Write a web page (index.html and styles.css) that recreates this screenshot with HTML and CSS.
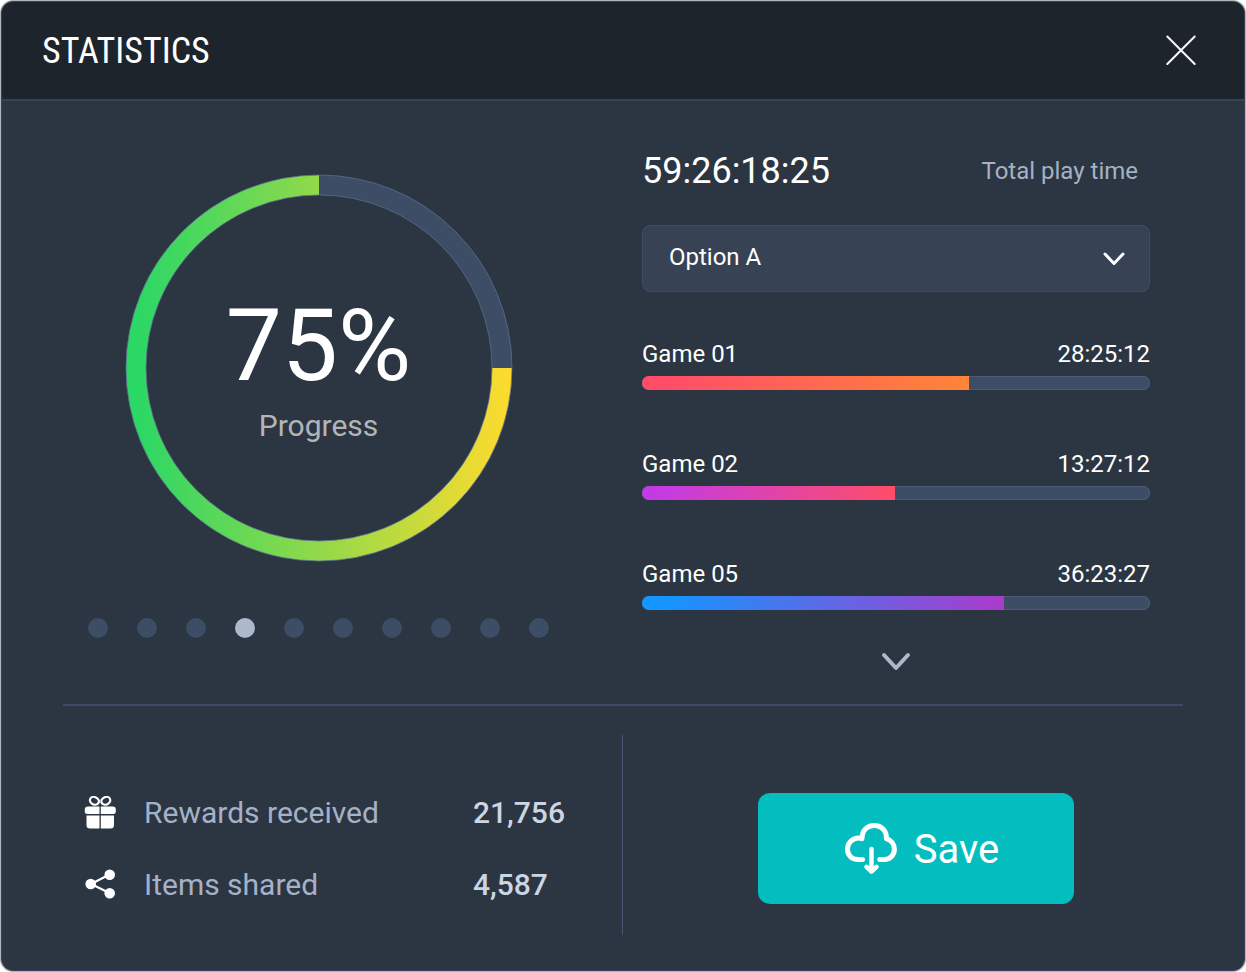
FILE: index.html
```html
<!DOCTYPE html>
<html lang="en">
<head>
<meta charset="utf-8">
<meta name="viewport" content="width=device-width, initial-scale=1">
<title>Statistics</title>
<link rel="stylesheet" href="styles.css">
</head>
<body>
<main class="panel">
  <header class="panel-header">
    <h1 class="title">STATISTICS</h1>
    <button class="close" type="button" aria-label="Close">
      <svg width="32" height="32" viewBox="0 0 32 32" fill="none" stroke="#f4f7fa" stroke-width="2.1" stroke-linecap="round"><path d="M2.300 1.500L29.700 29M29.700 1.500L2.300 29"/></svg>
    </button>
  </header>

  <div class="panel-body">
    <div class="overview">
      <section class="progress">
        <div class="ring">
          <svg class="ring-art" viewBox="0 0 388 388" fill="none" aria-hidden="true">
            <defs>
              <linearGradient id="ring-fill" gradientUnits="userSpaceOnUse" x1="12" y1="0" x2="382" y2="0">
                <stop offset="0" stop-color="#2bd765"/>
                <stop offset="1" stop-color="#fddb2e"/>
              </linearGradient>
            </defs>
            <circle cx="194" cy="194" r="183" stroke="#3d4d66" stroke-width="20"/>
            <path d="M377 194A183 183 0 1 1 194 11" stroke="url(#ring-fill)" stroke-width="20"/>
            <circle cx="194" cy="194" r="193" stroke="#5c708f" stroke-opacity=".75"/>
            <circle cx="194" cy="194" r="173" stroke="#5c708f" stroke-opacity=".75"/>
          </svg>
          <div class="ring-text">
            <strong class="percent">75%</strong>
            <span class="percent-label">Progress</span>
          </div>
        </div>
        <nav class="dots" aria-label="Pages">
          <button class="dot" type="button" aria-label="Page 1"></button>
          <button class="dot" type="button" aria-label="Page 2"></button>
          <button class="dot" type="button" aria-label="Page 3"></button>
          <button class="dot dot-active" type="button" aria-label="Page 4" aria-current="true"></button>
          <button class="dot" type="button" aria-label="Page 5"></button>
          <button class="dot" type="button" aria-label="Page 6"></button>
          <button class="dot" type="button" aria-label="Page 7"></button>
          <button class="dot" type="button" aria-label="Page 8"></button>
          <button class="dot" type="button" aria-label="Page 9"></button>
          <button class="dot" type="button" aria-label="Page 10"></button>
        </nav>
      </section>

      <section class="playtime">
        <div class="total">
          <span class="total-time">59:26:18:25</span>
          <label class="total-label" for="option">Total play time</label>
        </div>
        <div class="picker">
          <select class="picker-select" id="option">
            <option>Option A</option>
          </select>
          <svg class="picker-arrow" width="24" height="16" viewBox="0 0 24 16" fill="none" stroke="#fff" stroke-width="3" stroke-linecap="round" stroke-linejoin="round" aria-hidden="true"><path d="M3 3L12 12.500L21 3"/></svg>
        </div>
        <div class="games">
          <div class="game">
            <span>Game 01</span><span>28:25:12</span>
            <div class="bar"><div class="bar-fill bar-sunset" style="width:64.4%"></div></div>
          </div>
          <div class="game">
            <span>Game 02</span><span>13:27:12</span>
            <div class="bar"><div class="bar-fill bar-berry" style="width:49.8%"></div></div>
          </div>
          <div class="game">
            <span>Game 05</span><span>36:23:27</span>
            <div class="bar"><div class="bar-fill bar-ocean" style="width:71.3%"></div></div>
          </div>
        </div>
        <button class="more" type="button" aria-label="Show more games">
          <svg width="30" height="20" viewBox="0 0 30 20" fill="none" stroke="#adb8cc" stroke-width="4" stroke-linecap="round" stroke-linejoin="round"><path d="M3 3L15 16L27 3"/></svg>
        </button>
      </section>
    </div>

    <div class="summary">
      <ul class="facts">
        <li class="fact">
          <svg width="32" height="34" viewBox="0 0 32 34" aria-hidden="true">
            <g fill="none" stroke="#fff" stroke-width="2.200"><ellipse cx="10.400" cy="4.800" rx="4.600" ry="3.700" transform="rotate(25 10.400 4.800)"/><ellipse cx="21.800" cy="4.800" rx="4.600" ry="3.700" transform="rotate(-25 21.800 4.800)"/></g>
            <path fill="#fff" d="M4 10.500H15.500V18H3.500Q.8 18 .8 15.500V13.500Q.8 10.500 4 10.500ZM16.800 10.500H28.800Q31.800 10.500 31.800 13.500V15.500Q31.800 18 29.300 18H16.800ZM2.500 19.500H15.500V32.500H6Q2.500 32.500 2.500 29ZM16.800 19.500H30V29Q30 32.500 26.500 32.500H16.800Z"/>
          </svg>
          <span class="fact-name">Rewards received</span>
          <strong class="fact-value">21,756</strong>
        </li>
        <li class="fact">
          <svg width="32" height="34" viewBox="0 0 32 34" fill="#fff" aria-hidden="true">
            <path d="M25.500 6.500L7 16L25.500 25" fill="none" stroke="#fff" stroke-width="2.200"/>
            <circle cx="6.700" cy="16" r="5.300"/><circle cx="25.700" cy="6.700" r="5.300"/><circle cx="25.700" cy="25.200" r="5.300"/>
          </svg>
          <span class="fact-name">Items shared</span>
          <strong class="fact-value">4,587</strong>
        </li>
      </ul>
      <div class="actions">
        <button class="save" type="button">
          <svg width="54" height="54" viewBox="0 0 54 54" fill="none" stroke="#fff" stroke-width="5" stroke-linecap="round" stroke-linejoin="round" aria-hidden="true">
            <path d="M18.500 36.500H14C7.500 36.500 3.500 32 3.500 26.200C3.500 20 8.500 15 14.500 15Q16 15 18 15.600C18 7.500 23 2.500 30.200 2.500C37.500 2.500 43 8 42.300 15.600C47 17 50.400 21.400 50.400 26.200C50.400 32 46 36.500 40.500 36.500H35.800"/>
            <path d="M27.500 26V48" stroke-width="4.500"/><path d="M22.500 43.800L27.500 48.500L32.500 43.800" stroke-width="4.500"/>
          </svg>
          <span>Save</span>
        </button>
      </div>
    </div>
  </div>
</main>
</body>
</html>
```
FILE: styles.css
```css
* {
  box-sizing: border-box;
}

body {
  margin: 0;
  padding: 1px;
  min-height: 100vh;
  display: flex;
  background: #fff;
  color: #fff;
  font-family: Roboto, "Liberation Sans", sans-serif;
  font-size: 24px;
  line-height: 28px;
}

button {
  padding: 0;
  border: 0;
  background: none;
  color: inherit;
  font: inherit;
  cursor: pointer;
}

svg {
  display: block;
}

.panel {
  flex: 1;
  display: flex;
  flex-direction: column;
  border: 1px solid #384357;
  border-radius: 12px;
  background: #2c3642;
  box-shadow: 0 0 0 1px rgba(56, 67, 87, 0.4);
  overflow: hidden;
}

.panel-header {
  display: flex;
  align-items: center;
  justify-content: space-between;
  height: 99px;
  padding: 0 47px 0 40px;
  border-bottom: 2px solid #364256;
  background: #1d242b;
}

.title {
  margin: 0;
  font-family: "Roboto Condensed", Roboto, sans-serif;
  font-size: 36px;
  font-weight: 400;
  line-height: 44px;
}

.panel-body {
  flex: 1;
  display: flex;
  flex-direction: column;
  padding: 0 61px;
}

.overview {
  display: grid;
  grid-template-columns: 511fr 508fr;
  gap: 68px;
  padding: 48px 33px 32px 0;
  border-bottom: 2px solid #3d4a63;
}

.progress {
  display: flex;
  flex-direction: column;
  align-items: center;
  gap: 56px;
  padding-top: 25px;
}

.ring {
  display: grid;
  place-items: center;
  width: 100%;
  max-width: 388px;
}

.ring-art,
.ring-text {
  grid-area: 1 / 1;
}

.ring-art {
  width: 100%;
}

.ring-text {
  display: flex;
  flex-direction: column;
  align-items: center;
  gap: 4px;
}

.percent {
  font-size: 100px;
  font-weight: 400;
  line-height: 116px;
}

.percent-label {
  padding-bottom: 4px;
  color: #b3b4b8;
  font-size: 30px;
  line-height: 36px;
}

.dots {
  display: flex;
  gap: 29px;
}

.dot {
  width: 20px;
  height: 20px;
  border-radius: 50%;
  background: #3d4d66;
}

.dot-active {
  background: #adb8cb;
}

.playtime {
  display: flex;
  flex-direction: column;
}

.total {
  display: flex;
  align-items: center;
  justify-content: space-between;
  padding-right: 12px;
}

.total-time {
  font-size: 36px;
  line-height: 44px;
}

.total-label {
  color: #a5b1c4;
}

.picker {
  display: grid;
  align-items: center;
  margin-top: 32px;
}

.picker-select,
.picker-arrow {
  grid-area: 1 / 1;
}

.picker-select {
  width: 100%;
  height: 67px;
  padding: 0 56px 4px 26px;
  border: 1px solid #3d4d66;
  border-radius: 8px;
  background: #384255;
  color: #fff;
  font: inherit;
  appearance: none;
}

.picker-arrow {
  justify-self: end;
  margin-right: 24px;
  pointer-events: none;
}

.games {
  display: grid;
  gap: 60px;
  margin-top: 48px;
}

.game {
  display: grid;
  grid-template-columns: 1fr auto;
  row-gap: 8px;
}

.bar {
  grid-column: 1 / -1;
  height: 14px;
  border-radius: 7px;
  background: #3d4d66;
  box-shadow: inset 0 0 0 1px #4a5c78;
  overflow: hidden;
}

.bar-fill {
  height: 100%;
}

.bar-sunset {
  background: linear-gradient(90deg, #ff4d69 6%, #ff8538);
}

.bar-berry {
  background: linear-gradient(90deg, #c43be4 6%, #ff4d69);
}

.bar-ocean {
  background: linear-gradient(90deg, #1495ff 6%, #ab3bcb);
}

.more {
  align-self: center;
  margin-top: 42px;
}

.summary {
  flex: 1;
  display: grid;
  grid-template-columns: 1fr 1fr;
  padding: 29px 0 35px;
}

.facts {
  display: flex;
  flex-direction: column;
  gap: 36px;
  margin: 0;
  padding: 60px 0 0 21px;
  border-right: 1px solid #465671;
  list-style: none;
  font-size: 30px;
  line-height: 36px;
}

.fact {
  display: grid;
  grid-template-columns: 32px 301fr 149fr;
  column-gap: 28px;
  align-items: center;
}

.fact-name {
  color: #a5b1c7;
}

.fact-value {
  color: #ccd5e3;
  font-weight: 500;
}

.actions {
  display: flex;
  align-items: flex-start;
  justify-content: center;
  padding: 58px 0 0 25px;
}

.save {
  display: flex;
  align-items: center;
  justify-content: center;
  gap: 16px;
  width: 316px;
  height: 111px;
  padding: 2px 0 0 12px;
  border-radius: 12px;
  background: #04bdbf;
  font-size: 40px;
  line-height: 48px;
}
```
